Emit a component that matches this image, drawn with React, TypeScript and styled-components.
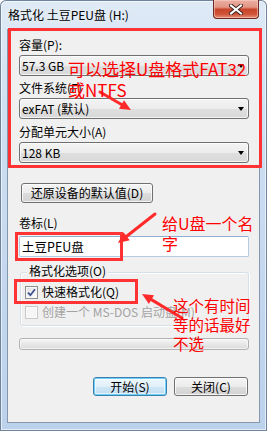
import React from "react";
import styled, { createGlobalStyle } from "styled-components";

const GlobalStyle = createGlobalStyle`
  html, body { margin: 0; padding: 0; background: #ffffff; }
  body { font-family: "Noto Sans CJK SC", "Liberation Sans", sans-serif; }
  * { box-sizing: border-box; }
`;

const UI_FONT = `"Noto Sans CJK SC", "Liberation Sans", sans-serif`;

const Window = styled.div`
  position: relative;
  width: 267px;
  height: 431px;
  padding: 0 7px 8px 7px;
  display: flex;
  flex-direction: column;
  background: linear-gradient(180deg, #dfeaf6 0%, #cfe0f2 25%, #c2d6ee 70%, #bcd2ec 100%);
  border-radius: 6px 6px 0 0;
  box-shadow: inset 0 0 0 1px #6f839b, inset 0 0 0 2px rgba(255, 255, 255, 0.6);
  overflow: hidden;
  font-family: ${UI_FONT};
  font-size: 12px;
  color: #000;
`;

const TitleBar = styled.div`
  height: 29px;
  flex-shrink: 0;
  display: flex;
  align-items: flex-start;
  justify-content: space-between;
`;

const Title = styled.div`
  margin: 7px 0 0 1px;
  line-height: 16px;
  font-size: 12px;
  color: #000;
  text-shadow: 0 0 6px rgba(255, 255, 255, 0.9);
`;

const CloseButton = styled.div`
  width: 46px;
  height: 19px;
  margin-right: 1px;
  border: 1px solid #6b2b22;
  border-top: none;
  border-radius: 0 0 4px 4px;
  background: linear-gradient(
    180deg,
    #eab0a3 0%,
    #e29584 40%,
    #c8452c 52%,
    #cf5337 78%,
    #e59277 100%
  );
  box-shadow: inset 0 0 0 1px rgba(255, 210, 200, 0.55);
  display: flex;
  align-items: center;
  justify-content: center;
`;

const Client = styled.div`
  flex: 1;
  background: #f0f0f0;
  border: 1px solid #8597ad;
  padding: 7px 10px 0 11px;
  display: flex;
  flex-direction: column;
`;

const FieldLabel = styled.div<{ $gap: number }>`
  height: 16px;
  line-height: 16px;
  margin-top: ${(p) => p.$gap}px;
  white-space: nowrap;
`;

const Combo = styled.div`
  height: 21px;
  margin-top: 2px;
  border: 1px solid #707070;
  border-radius: 3px;
  background: linear-gradient(180deg, #f4f4f4 0%, #ececec 50%, #dfdfdf 51%, #d8d8d8 100%);
  box-shadow: inset 0 0 0 1px rgba(255, 255, 255, 0.7);
  display: flex;
  align-items: center;
  justify-content: space-between;
  padding: 0 4px 0 2px;
  line-height: 16px;
`;

const DropArrow = styled.span`
  width: 0;
  height: 0;
  border-left: 3.5px solid transparent;
  border-right: 3.5px solid transparent;
  border-top: 4px solid #000;
  margin-top: 1px;
`;

const PushButton = styled.div<{ $width: number; $primary?: boolean }>`
  width: ${(p) => p.$width}px;
  height: ${(p) => (p.$primary !== undefined ? 19 : 20)}px;
  border: 1px solid ${(p) => (p.$primary ? "#3c7fb1" : "#707070")};
  border-radius: 3px;
  background: ${(p) =>
    p.$primary
      ? "linear-gradient(180deg, #eef7fd 0%, #e0f0fa 50%, #cfe6f5 51%, #c2def1 100%)"
      : "linear-gradient(180deg, #f4f4f4 0%, #ececec 50%, #dddddd 51%, #d2d2d2 100%)"};
  box-shadow: ${(p) =>
    p.$primary
      ? "inset 0 0 0 1px #6dd0f7, inset 0 0 0 2px rgba(255,255,255,0.5)"
      : "inset 0 0 0 1px rgba(255,255,255,0.75)"};
  display: flex;
  align-items: center;
  justify-content: center;
  line-height: 16px;
  white-space: nowrap;
`;

const ResetRow = styled.div`
  margin: 20px 0 0 2px;
  display: flex;
`;

const TextBox = styled.div`
  height: 21px;
  margin-top: 5px;
  border: 1px solid #b6cbe1;
  border-top-color: #8fb0d2;
  border-radius: 2px;
  background: #ffffff;
  padding: 0 2px;
  display: flex;
  align-items: center;
  line-height: 16px;
  font-size: 12.5px;
`;

const GroupBox = styled.div`
  width: 229px;
  margin: 15px 0 0 1px;
  border: 1px solid #d5dfe5;
  border-radius: 3px;
  box-shadow: inset 1px 1px 0 #ffffff, 1px 1px 0 #ffffff;
  padding: 0 0 5px 4px;
  display: flex;
  flex-direction: column;
`;

const Legend = styled.div`
  align-self: flex-start;
  margin: -10px 0 0 2px;
  padding: 0 2px;
  background: #f0f0f0;
  line-height: 16px;
  height: 16px;
`;

const CheckRow = styled.div<{ $gap: number; $disabled?: boolean }>`
  display: flex;
  align-items: center;
  gap: 4px;
  height: 16px;
  line-height: 16px;
  margin-top: ${(p) => p.$gap}px;
  color: ${(p) => (p.$disabled ? "#a3a3a3" : "#000")};
  white-space: nowrap;
`;

const CheckBox = styled.span<{ $disabled?: boolean }>`
  width: 13px;
  height: 13px;
  flex-shrink: 0;
  border: 1px solid ${(p) => (p.$disabled ? "#c9c9c9" : "#8e8f8f")};
  background: ${(p) =>
    p.$disabled ? "#f6f6f6" : "linear-gradient(135deg, #dcdcdc 0%, #f4f4f4 60%, #ffffff 100%)"};
  box-shadow: inset 0 0 0 1px ${(p) => (p.$disabled ? "#fbfbfb" : "#f7f7f7")};
  display: flex;
  align-items: center;
  justify-content: center;
`;

const Progress = styled.div`
  height: 12px;
  margin-top: 12px;
  border: 1px solid #b2b2b2;
  border-radius: 3px;
  background: linear-gradient(180deg, #f5f5f5 0%, #e8e8e8 50%, #dbdbdb 100%);
  box-shadow: inset 0 0 0 1px rgba(255, 255, 255, 0.6);
`;

const ButtonRow = styled.div`
  margin-top: 27px;
  padding-right: 1px;
  display: flex;
  justify-content: flex-end;
  gap: 7px;
`;

const Overlay = styled.svg`
  position: absolute;
  left: 0;
  top: 0;
  pointer-events: none;
`;

const Note = styled.div<{ $x: number; $y: number; $size: number; $lh: number }>`
  position: absolute;
  left: ${(p) => p.$x}px;
  top: ${(p) => p.$y}px;
  font-family: "Noto Sans CJK SC", "Liberation Sans", sans-serif;
  font-size: ${(p) => p.$size}px;
  line-height: ${(p) => p.$lh}px;
  color: #ff0000;
  white-space: nowrap;
  pointer-events: none;
`;

type Pt = [number, number];

function Arrow({ from, to }: { from: Pt; to: Pt }) {
  const dx = to[0] - from[0];
  const dy = to[1] - from[1];
  const len = Math.hypot(dx, dy);
  const ux = dx / len;
  const uy = dy / len;
  const headLen = 11;
  const half = 5;
  const bx = to[0] - ux * headLen;
  const by = to[1] - uy * headLen;
  const p1 = `${bx - uy * half},${by + ux * half}`;
  const p2 = `${bx + uy * half},${by - ux * half}`;
  return (
    <g>
      <line
        x1={from[0]}
        y1={from[1]}
        x2={bx + ux * 2}
        y2={by + uy * 2}
        stroke="#ff2b2b"
        strokeWidth={3}
        strokeLinecap="round"
      />
      <polygon points={`${to[0]},${to[1]} ${p1} ${p2}`} fill="#ff2b2b" />
    </g>
  );
}

export default function App() {
  return (
    <>
      <GlobalStyle />
      <Window>
        <TitleBar>
          <Title>格式化 土豆PEU盘 (H:)</Title>
          <CloseButton>
            <svg width="14" height="11" viewBox="0 0 14 11">
              <path d="M2 1.5 L12 9.5 M12 1.5 L2 9.5" stroke="#3b2522" strokeWidth={4} strokeLinecap="square" />
              <path d="M2 1.5 L12 9.5 M12 1.5 L2 9.5" stroke="#ffffff" strokeWidth={2} strokeLinecap="square" />
            </svg>
          </CloseButton>
        </TitleBar>
        <Client>
          <FieldLabel $gap={0}>容量(P):</FieldLabel>
          <Combo>
            <span>57.3 GB</span>
            <DropArrow />
          </Combo>
          <FieldLabel $gap={4}>文件系统(F)</FieldLabel>
          <Combo>
            <span>exFAT (默认)</span>
            <DropArrow />
          </Combo>
          <FieldLabel $gap={5}>分配单元大小(A)</FieldLabel>
          <Combo>
            <span>128 KB</span>
            <DropArrow />
          </Combo>
          <ResetRow>
            <PushButton $width={132}>还原设备的默认值(D)</PushButton>
          </ResetRow>
          <FieldLabel $gap={12}>卷标(L)</FieldLabel>
          <TextBox>土豆PEU盘</TextBox>
          <GroupBox>
            <Legend>格式化选项(O)</Legend>
            <CheckRow $gap={5}>
              <CheckBox>
                <svg width="9" height="9" viewBox="0 0 9 9">
                  <path d="M1 4.6 L3.4 7.2 L8 1.2" fill="none" stroke="#3d4f8f" strokeWidth={1.8} />
                </svg>
              </CheckBox>
              快速格式化(Q)
            </CheckRow>
            <CheckRow $gap={4} $disabled>
              <CheckBox $disabled />
              创建一个 MS-DOS 启动盘(M)
            </CheckRow>
          </GroupBox>
          <Progress />
          <ButtonRow>
            <PushButton $width={74} $primary>
              开始(S)
            </PushButton>
            <PushButton $width={74} $primary={false}>
              关闭(C)
            </PushButton>
          </ButtonRow>
        </Client>

        <Overlay width="267" height="431" viewBox="0 0 267 431">
          <rect x="9.5" y="29.5" width="251" height="137" fill="none" stroke="#ff3333" strokeWidth={3} />
          <rect x="16.5" y="233.5" width="105" height="26" fill="none" stroke="#ff3333" strokeWidth={3} />
          <rect x="15.5" y="280.5" width="121" height="22" fill="none" stroke="#ff3333" strokeWidth={3} />
          <Arrow from={[100, 92]} to={[131, 110]} />
          <Arrow from={[155, 214]} to={[118, 243]} />
          <Arrow from={[182, 318]} to={[142, 294]} />
        </Overlay>
        <Note $x={68} $y={58} $size={17} $lh={21}>
          可以选择U盘格式FAT32
          <br />
          或NTFS
        </Note>
        <Note $x={162} $y={213} $size={16} $lh={20}>
          给U盘一个名
          <br />字
        </Note>
        <Note $x={173} $y={296} $size={15.5} $lh={19}>
          这个有时间
          <br />
          等的话最好
          <br />
          不选
        </Note>
      </Window>
    </>
  );
}
